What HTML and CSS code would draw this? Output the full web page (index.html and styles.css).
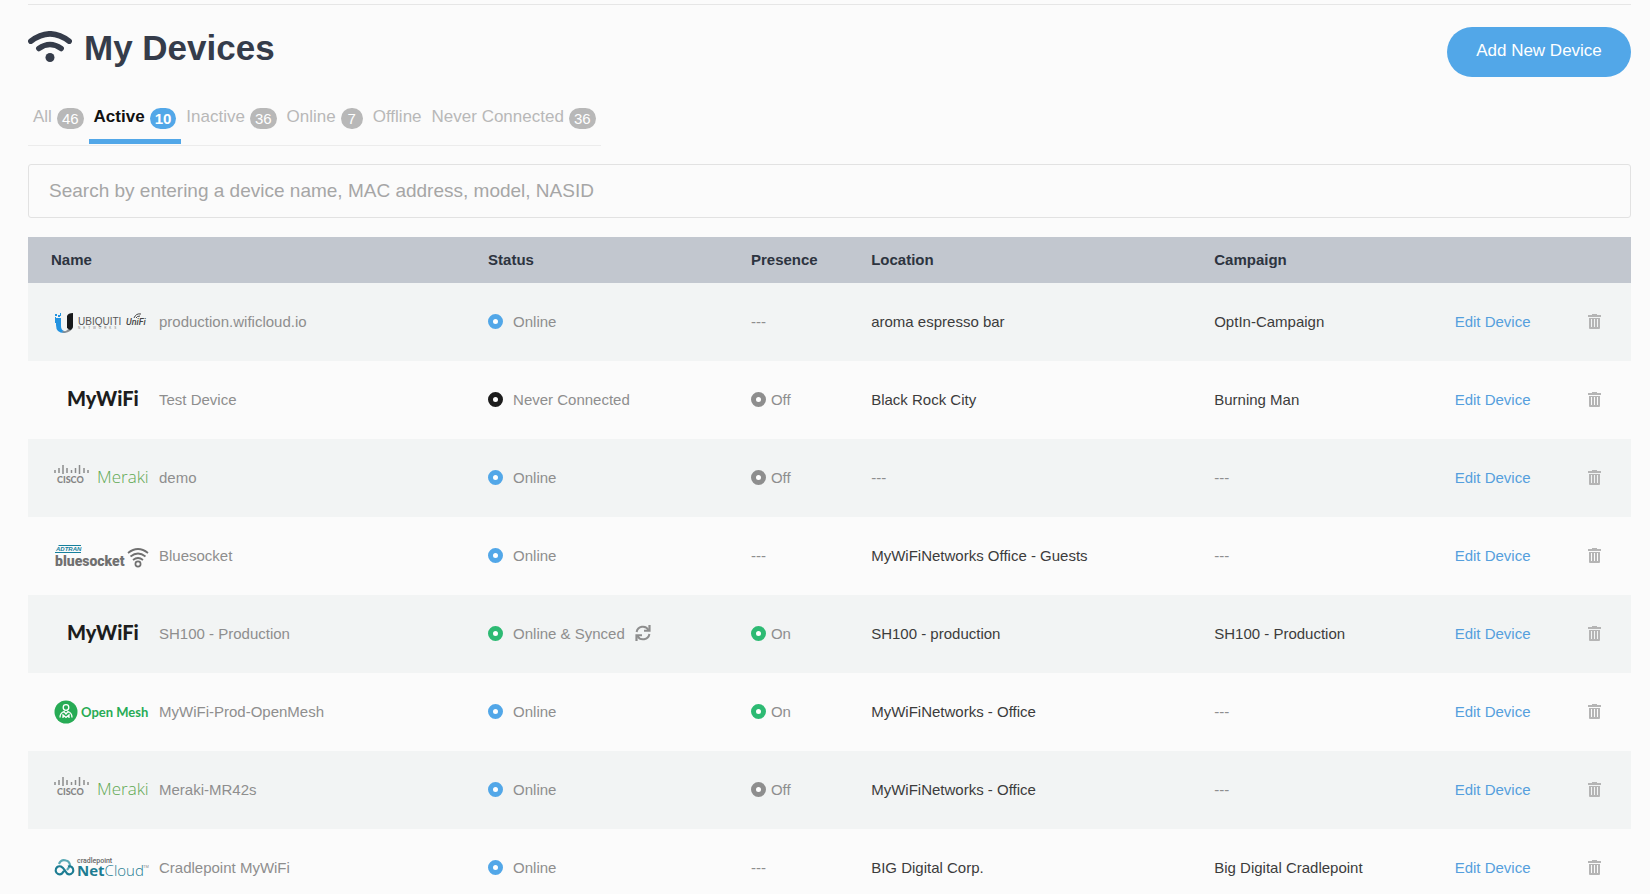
FILE: index.html
```html
<!DOCTYPE html>
<html lang="en">
<head>
    <meta charset="UTF-8">
    <meta name="viewport" content="width=device-width, initial-scale=1.0">
    <title>My Devices</title>
    <link rel="stylesheet" href="styles.css">
</head>
<body>
    <!-- Shared icons and vendor logos -->
    <svg class="sprite" aria-hidden="true">
        <symbol id="icon-trash" viewBox="0 0 13 15">
            <path fill="currentColor" d="M4 0h5v1h4v2H0V1h4z"/>
            <path fill="currentColor" fill-rule="evenodd" d="M1 4h11v10q0 1-1 1H2q-1 0-1-1zM3 5v8h1V5zM6 5v8h1V5zM9 5v8h1V5z"/>
        </symbol>
        <symbol id="icon-sync" viewBox="0 0 16 16">
            <path fill="none" stroke="currentColor" stroke-width="2" d="M1.6 7A6.4 6.4 0 0 1 13.5 5M14.4 9A6.4 6.4 0 0 1 2.5 11"/>
            <path fill="currentColor" d="M13.4 0H15.600v6.800H9V4.800h4.400zM2.600 16H.4V9.200H7v2H2.600z"/>
        </symbol>
        <symbol id="logo-unifi" viewBox="0 0 96 30">
            <path fill="#2493e0" d="M2 11h5v8q0 4 3 5l2 2q-10 1-10-8zM1 7h2v2H1zM4 8h2v2H4zM6 6h1v3H6zM1 10h1v6H1z"/>
            <path fill="#8b8f93" d="M8 24q6 1 7-4l4-1q-1 7-10 7z"/>
            <path fill="#17181a" d="M13 9q1-3 6-3v13q0 3-3 4l-3-2z"/>
            <text class="logo-ubiquiti" x="24" y="18">UBIQUITI</text>
            <text class="logo-networks" x="24" y="22">NETWORKS</text>
            <text class="logo-unifi" x="72" y="18">UniFi</text>
            <path fill="none" stroke="#444" d="M80 11q2-5 7-4M82 11q1-2 4-2"/>
        </symbol>
        <symbol id="logo-mywifi" viewBox="0 0 96 30">
            <text class="logo-mywifi" x="13" y="21">MyWiFi</text>
        </symbol>
        <symbol id="logo-meraki" viewBox="0 0 96 30">
            <path fill="none" stroke="#8c8c8c" stroke-width="1.500" d="M1 7v3M5 5v5M9 2v9M13 5v5M17.500 7v3M21.500 5v5M25.500 2v9M30 5v5M34 7v3"/>
            <text class="logo-cisco" x="3" y="20">CISCO</text>
            <text class="logo-meraki" x="43" y="20">Meraki</text>
        </symbol>
        <symbol id="logo-bluesocket" viewBox="0 0 96 30">
            <path fill="#16809c" d="M5 4h22v1H4zM1 11h26v1H1z"/>
            <text class="logo-adtran" x="2" y="10">ADTRAN</text>
            <text class="logo-bluesocket" x="1" y="25">bluesocket</text>
            <g fill="none" stroke="#707070" stroke-width="1.700">
                <path d="M74 12q10-8 20 0M76.500 15.500q7.500-6 15 0M79 19q5-4 10 0"/>
                <circle cx="84" cy="23" r="2.600"/>
            </g>
        </symbol>
        <symbol id="logo-openmesh" viewBox="0 0 96 30">
            <circle cx="12" cy="15" r="11.500" fill="#27ab55"/>
            <g fill="none" stroke="#fff" stroke-width="1.300">
                <circle cx="12" cy="10.500" r="2.800"/>
                <path d="M6 20.500q0-4.500 4-6l2 2.500 2-2.500q4 1.500 4 6M9 21v-3l3 2.500 3-2.500v3"/>
            </g>
            <text class="logo-openmesh" x="27" y="20">Open Mesh</text>
        </symbol>
        <symbol id="logo-netcloud" viewBox="0 0 96 30">
            <g fill="none" stroke-width="2.200">
                <path stroke="#5ba9b5" d="M5 11q2-5 7-3.500 4 1 4 5.500l-3 4"/>
                <path stroke="#1c7c92" d="M10 18L8 20.500a4 4 0 1 1-1-7q2 1 4 4l2 3a4 4 0 1 0 1-7"/>
            </g>
            <text class="logo-cradlepoint" x="23" y="10">cradlepoint</text>
            <text class="logo-netcloud" x="23" y="23">Net<tspan class="logo-light">Cloud</tspan></text>
            <text class="logo-tm" x="89" y="15">TM</text>
        </symbol>
    </svg>

    <main class="page">
        <header class="page-header">
            <h1>
                <svg class="wifi" viewBox="0 0 44 31" aria-hidden="true">
                    <path fill="none" stroke="currentColor" stroke-width="5.500" stroke-linecap="round" d="M2.800 10.200Q22-4.600 41.200 10.200M10.800 17.500Q22 9.500 33.200 17.500"/>
                    <circle cx="22" cy="26.500" r="4.500" fill="currentColor"/>
                </svg>
                My Devices
            </h1>
            <button type="button" class="add-button">Add New Device</button>
        </header>

        <nav class="tabs">
            <a href="#all">All <span class="badge">46</span></a>
            <a href="#active" class="active">Active <span class="badge">10</span></a>
            <a href="#inactive">Inactive <span class="badge">36</span></a>
            <a href="#online">Online <span class="badge">7</span></a>
            <a href="#offline">Offline</a>
            <a href="#never">Never Connected <span class="badge">36</span></a>
        </nav>

        <input type="text" class="search" aria-label="Search devices" placeholder="Search by entering a device name, MAC address, model, NASID">

        <table class="devices">
            <colgroup>
                <col class="col-name">
                <col class="col-status">
                <col class="col-presence">
                <col class="col-location">
                <col class="col-campaign">
                <col class="col-edit">
                <col class="col-delete">
            </colgroup>
            <thead>
                <tr>
                    <th>Name</th>
                    <th>Status</th>
                    <th>Presence</th>
                    <th>Location</th>
                    <th>Campaign</th>
                    <th></th>
                    <th></th>
                </tr>
            </thead>
            <tbody>
                <tr>
                    <td><div class="name"><svg class="logo"><use href="#logo-unifi"/></svg>production.wificloud.io</div></td>
                    <td><div class="status"><i class="dot blue"></i>Online</div></td>
                    <td>---</td>
                    <td class="dark">aroma espresso bar</td>
                    <td class="dark">OptIn-Campaign</td>
                    <td><a href="#edit">Edit Device</a></td>
                    <td><button type="button" class="delete" aria-label="Delete device"><svg><use href="#icon-trash"/></svg></button></td>
                </tr>
                <tr>
                    <td><div class="name"><svg class="logo"><use href="#logo-mywifi"/></svg>Test Device</div></td>
                    <td><div class="status"><i class="dot black"></i>Never Connected</div></td>
                    <td><div class="presence"><i class="dot gray"></i>Off</div></td>
                    <td class="dark">Black Rock City</td>
                    <td class="dark">Burning Man</td>
                    <td><a href="#edit">Edit Device</a></td>
                    <td><button type="button" class="delete" aria-label="Delete device"><svg><use href="#icon-trash"/></svg></button></td>
                </tr>
                <tr>
                    <td><div class="name"><svg class="logo"><use href="#logo-meraki"/></svg>demo</div></td>
                    <td><div class="status"><i class="dot blue"></i>Online</div></td>
                    <td><div class="presence"><i class="dot gray"></i>Off</div></td>
                    <td>---</td>
                    <td>---</td>
                    <td><a href="#edit">Edit Device</a></td>
                    <td><button type="button" class="delete" aria-label="Delete device"><svg><use href="#icon-trash"/></svg></button></td>
                </tr>
                <tr>
                    <td><div class="name"><svg class="logo"><use href="#logo-bluesocket"/></svg>Bluesocket</div></td>
                    <td><div class="status"><i class="dot blue"></i>Online</div></td>
                    <td>---</td>
                    <td class="dark">MyWiFiNetworks Office - Guests</td>
                    <td>---</td>
                    <td><a href="#edit">Edit Device</a></td>
                    <td><button type="button" class="delete" aria-label="Delete device"><svg><use href="#icon-trash"/></svg></button></td>
                </tr>
                <tr>
                    <td><div class="name"><svg class="logo"><use href="#logo-mywifi"/></svg>SH100 - Production</div></td>
                    <td><div class="status"><i class="dot green"></i>Online &amp; Synced <svg class="sync"><use href="#icon-sync"/></svg></div></td>
                    <td><div class="presence"><i class="dot green"></i>On</div></td>
                    <td class="dark">SH100 - production</td>
                    <td class="dark">SH100 - Production</td>
                    <td><a href="#edit">Edit Device</a></td>
                    <td><button type="button" class="delete" aria-label="Delete device"><svg><use href="#icon-trash"/></svg></button></td>
                </tr>
                <tr>
                    <td><div class="name"><svg class="logo"><use href="#logo-openmesh"/></svg>MyWiFi-Prod-OpenMesh</div></td>
                    <td><div class="status"><i class="dot blue"></i>Online</div></td>
                    <td><div class="presence"><i class="dot green"></i>On</div></td>
                    <td class="dark">MyWiFiNetworks - Office</td>
                    <td>---</td>
                    <td><a href="#edit">Edit Device</a></td>
                    <td><button type="button" class="delete" aria-label="Delete device"><svg><use href="#icon-trash"/></svg></button></td>
                </tr>
                <tr>
                    <td><div class="name"><svg class="logo"><use href="#logo-meraki"/></svg>Meraki-MR42s</div></td>
                    <td><div class="status"><i class="dot blue"></i>Online</div></td>
                    <td><div class="presence"><i class="dot gray"></i>Off</div></td>
                    <td class="dark">MyWiFiNetworks - Office</td>
                    <td>---</td>
                    <td><a href="#edit">Edit Device</a></td>
                    <td><button type="button" class="delete" aria-label="Delete device"><svg><use href="#icon-trash"/></svg></button></td>
                </tr>
                <tr>
                    <td><div class="name"><svg class="logo"><use href="#logo-netcloud"/></svg>Cradlepoint MyWiFi</div></td>
                    <td><div class="status"><i class="dot blue"></i>Online</div></td>
                    <td>---</td>
                    <td class="dark">BIG Digital Corp.</td>
                    <td class="dark">Big Digital Cradlepoint</td>
                    <td><a href="#edit">Edit Device</a></td>
                    <td><button type="button" class="delete" aria-label="Delete device"><svg><use href="#icon-trash"/></svg></button></td>
                </tr>
            </tbody>
        </table>
    </main>
</body>
</html>
```
FILE: styles.css
```css
* {
    box-sizing: border-box;
}

body {
    margin: 0;
    font-family: "Liberation Sans", Arial, sans-serif;
    font-size: 15px;
    color: #8e8e8e;
    background-color: #fbfbfb;
}

.sprite {
    display: none;
}

.page {
    padding: 4px 19px 0 28px;
}

.page-header {
    display: flex;
    justify-content: space-between;
    align-items: flex-start;
    border-top: 1px solid #e6e6e6;
    padding-top: 22px;
}

h1 {
    display: flex;
    align-items: center;
    gap: 12px;
    margin: 0;
    font-size: 35px;
    line-height: 42px;
    color: #353c4a;
}

.wifi {
    width: 44px;
    height: 31px;
    margin-bottom: 3px;
}

.add-button {
    width: 184px;
    height: 50px;
    padding: 0 0 2px;
    border: none;
    border-radius: 25px;
    background-color: #52a7e8;
    color: #fff;
    font: inherit;
    font-size: 17px;
    cursor: pointer;
}

.tabs {
    display: inline-flex;
    margin-top: 22px;
    padding-bottom: 1px;
    border-bottom: 1px solid #ececec;
}

.tabs a {
    display: flex;
    align-items: center;
    gap: 5px;
    height: 45px;
    padding: 0 5px 4px;
    border-bottom: 5px solid transparent;
    font-size: 17px;
    color: #b8b8b8;
    text-decoration: none;
}

.tabs .active {
    border-bottom-color: #52a7e8;
    color: #111;
    font-weight: bold;
}

.badge {
    min-width: 22px;
    padding: 0 5px;
    margin-top: 3px;
    border-radius: 11px;
    background-color: #b8b8b8;
    color: #fff;
    font-size: 15px;
    line-height: 21px;
    text-align: center;
}

.active .badge {
    background-color: #52a7e8;
}

.search {
    display: block;
    width: 100%;
    height: 54px;
    margin: 18px 0 19px;
    padding: 0 20px 1px;
    border: 1px solid #e2e2e2;
    border-radius: 3px;
    background-color: transparent;
    font: inherit;
    font-size: 19px;
}

.search::placeholder {
    color: #a6a6a6;
}

.devices {
    width: 100%;
    table-layout: fixed;
    border-collapse: collapse;
}

.col-name { width: 28.7%; }
.col-status { width: 16.4%; }
.col-presence { width: 7.5%; }
.col-location { width: 21.4%; }
.col-campaign { width: 15%; }
.col-edit { width: 8.3%; }
.col-delete { width: 2.7%; }

th,
td {
    padding: 0 0 2px;
    text-align: left;
    white-space: nowrap;
}

th {
    height: 46px;
    background-color: #c2c7cf;
    color: #2d3440;
}

th:first-child {
    padding-left: 23px;
}

td {
    height: 78px;
}

td:first-child {
    padding-left: 26px;
}

tbody tr:nth-child(odd) {
    background-color: #f2f4f4;
}

.dark {
    color: #3c3c3c;
}

td a {
    color: #559fdd;
    text-decoration: none;
}

.name,
.status {
    display: flex;
    align-items: center;
    gap: 10px;
}

.name {
    gap: 9px;
}

.presence {
    display: flex;
    align-items: center;
    gap: 5px;
}

.logo {
    width: 96px;
    height: 30px;
    margin-top: 2px;
}

.dot {
    width: 15px;
    height: 15px;
    border: 5px solid;
    border-radius: 50%;
    background-color: #fff;
}

.blue { border-color: #52a7e8; }
.green { border-color: #2dba73; }
.gray { border-color: #8e8e8e; }
.black { border-color: #1d1d1d; }

.sync {
    width: 16px;
    height: 16px;
}

.delete {
    display: block;
    padding: 0;
    border: none;
    background: none;
    color: #b5b5b5;
    cursor: pointer;
}

.delete svg {
    display: block;
    width: 13px;
    height: 15px;
}

/* Logo lettering */
.logo-ubiquiti {
    font-size: 10px;
    fill: #555;
}

.logo-networks {
    font-size: 3px;
    letter-spacing: 3px;
    fill: #777;
}

.logo-unifi {
    font-family: Roboto, sans-serif;
    font-size: 9px;
    font-style: italic;
    font-weight: 500;
    fill: #444;
}

.logo-mywifi {
    font-family: Lato, sans-serif;
    font-size: 20px;
    font-weight: 900;
    fill: #1d1d1d;
}

.logo-cisco {
    font-family: Lato, sans-serif;
    font-size: 9px;
    font-weight: 900;
    fill: #858585;
}

.logo-meraki {
    font-family: "Open Sans", sans-serif;
    font-size: 17px;
    font-weight: 300;
    fill: #5fa852;
}

.logo-adtran {
    font-size: 6px;
    font-style: italic;
    font-weight: bold;
    fill: #16809c;
}

.logo-bluesocket {
    font-family: Roboto, sans-serif;
    font-size: 14px;
    font-weight: 900;
    fill: #707070;
}

.logo-openmesh {
    font-family: Lato, sans-serif;
    font-size: 13px;
    font-weight: bold;
    fill: #27ab55;
}

.logo-cradlepoint {
    font-family: Roboto, sans-serif;
    font-size: 7px;
    font-weight: 500;
    fill: #666;
}

.logo-netcloud {
    font-family: "Open Sans", sans-serif;
    font-size: 15px;
    font-weight: bold;
    fill: #1c7c92;
}

.logo-light {
    font-weight: 300;
}

.logo-tm {
    font-size: 4px;
    fill: #888;
}
```
